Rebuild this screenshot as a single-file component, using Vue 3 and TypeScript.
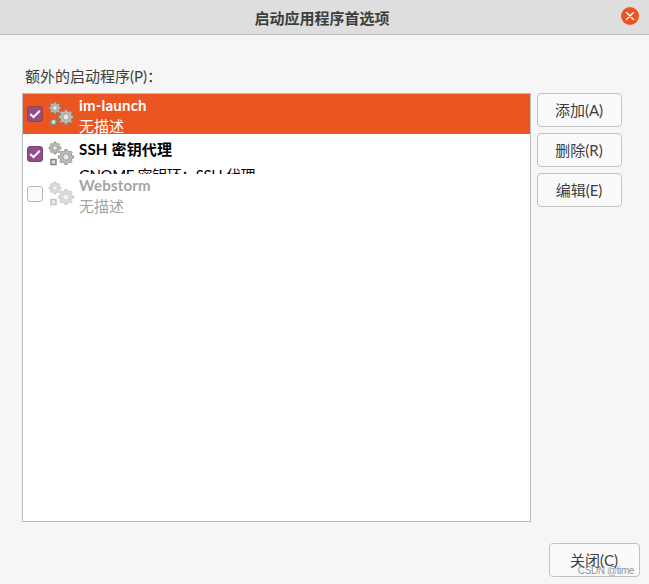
<script setup lang="ts">
interface Row { name: string; desc: string; checked: boolean; selected?: boolean; disabled?: boolean; clipped?: boolean }
const rows: Row[] = [
  { name: 'im-launch', desc: '无描述', checked: true, selected: true },
  { name: 'SSH 密钥代理', desc: 'GNOME 密钥环：SSH 代理', checked: true, clipped: true },
  { name: 'Webstorm', desc: '无描述', checked: false, disabled: true },
]
const buttons = ['添加(A)', '删除(R)', '编辑(E)']

function gear(cx: number, cy: number, outer: number, inner: number, teeth: number): string {
  const pts: string[] = []
  const step = (Math.PI * 2) / teeth
  for (let i = 0; i < teeth; i++) {
    const a = i * step
    const w = step * 0.24
    const corners: [number, number][] = [
      [a - w * 1.25, inner], [a - w * 0.8, outer], [a + w * 0.8, outer], [a + w * 1.25, inner],
    ]
    for (const [an, r] of corners) {
      pts.push(`${(cx + Math.cos(an) * r).toFixed(2)} ${(cy + Math.sin(an) * r).toFixed(2)}`)
    }
  }
  return 'M' + pts.join('L') + 'Z'
}
const bigGear = gear(18, 16, 7.6, 6, 8)
const midGear = gear(7, 7, 6, 4.6, 8)
</script>

<template>
  <div class="window">
    <header class="titlebar">
      <span class="title">启动应用程序首选项</span>
      <span class="close">
        <svg width="10" height="10" viewBox="0 0 10 10"><path d="M1.5 1.5L8.5 8.5M8.5 1.5L1.5 8.5" stroke="#fff" stroke-width="1.4" stroke-linecap="round" /></svg>
      </span>
    </header>
    <main class="content">
      <div class="label">额外的启动程序(P)：</div>
      <div class="columns">
        <div class="list">
          <div
            v-for="row in rows"
            :key="row.name"
            class="row"
            :class="{ selected: row.selected, disabled: row.disabled, clipped: row.clipped }"
          >
            <span class="check" :class="{ on: row.checked }">
              <svg v-if="row.checked" width="12" height="10" viewBox="0 0 12 10"><path d="M1.2 5L4.5 8.2L10.8 1.8" fill="none" stroke="#fff" stroke-width="2" /></svg>
            </span>
            <svg class="gears" width="26" height="26" viewBox="0 0 26 26">
              <path :d="midGear" fill="#bebdb9" stroke="#85847f" stroke-width="0.8" />
              <circle cx="7" cy="7" r="2.4" fill="#e9e8e5" stroke="#85847f" stroke-width="0.7" />
              <path :d="bigGear" fill="#bebdb9" stroke="#85847f" stroke-width="0.8" />
              <circle cx="18" cy="16" r="3.2" fill="#e9e8e5" stroke="#85847f" stroke-width="0.7" />
              <rect x="3" y="18.5" width="5" height="5" fill="#dddcd8" stroke="#85847f" stroke-width="1.5" />
            </svg>
            <div class="text">
              <div class="name">{{ row.name }}</div>
              <div class="desc">{{ row.desc }}</div>
            </div>
          </div>
        </div>
        <div class="actions">
          <button v-for="b in buttons" :key="b" class="btn">{{ b }}</button>
        </div>
      </div>
      <div class="footer">
        <button class="btn close-btn">关闭(C)</button>
      </div>
    </main>
    <span class="watermark">CSDN @time</span>
  </div>
</template>

<style>
html, body { margin: 0; background: #f6f6f6; }
</style>

<style scoped>
.window {
  position: relative;
  width: 649px;
  height: 584px;
  display: flex;
  flex-direction: column;
  overflow: hidden;
  background: #f6f6f6;
  color: #3d3d3d;
  font: 15px Lato, "Noto Sans CJK SC", sans-serif;
}
.titlebar {
  position: relative;
  flex: none;
  height: 34px;
  box-sizing: content-box;
  border-bottom: 1px solid #bdbdbd;
  background: #dedede;
  display: flex;
  align-items: center;
  justify-content: center;
  padding-right: 5px;
}
.title { font-weight: 700; color: #3d3d3d; }
.close {
  position: absolute;
  right: 10px;
  top: 7px;
  width: 18px;
  height: 18px;
  border-radius: 50%;
  background: #eb5521;
  display: flex;
  align-items: center;
  justify-content: center;
}
.content {
  flex: 1;
  min-height: 0;
  display: flex;
  flex-direction: column;
  padding: 31px 9px 7px 22px;
}
.label {
  height: 27px;
  line-height: 21px;
  padding-left: 3px;
}
.columns { display: flex; gap: 6px; }
.list {
  box-sizing: border-box;
  width: 509px;
  height: 429px;
  border: 1px solid #bcbcbc;
  background: #fff;
  overflow: hidden;
}
.row {
  box-sizing: border-box;
  height: 40px;
  display: flex;
  align-items: flex-start;
  overflow: hidden;
  color: #000;
}
.row.clipped .text { padding-top: 5px; }
.row.clipped .desc { margin-top: 5px; letter-spacing: -0.4px; }
.row.selected { background: #eb5521; color: #fff; }
.row.disabled { color: #a5a5a5; }
.row.disabled .gears { opacity: 0.5; }
.check {
  flex: none;
  box-sizing: border-box;
  width: 16px;
  height: 16px;
  margin: 12px 0 0 4px;
  border: 1px solid #b8b8b8;
  border-radius: 3px;
  background: #fbfbfb;
  display: flex;
  align-items: center;
  justify-content: center;
}
.check.on { background: #924d8b; border-color: #7d4277; }
.selected .check.on { border-color: #a8412a; }
.gears { flex: none; margin: 7px 0 0 5px; }
.text { margin-left: 5px; padding-top: 1px; }
.name { font-weight: 700; line-height: 21px; height: 21px; letter-spacing: 0.2px; }
.desc { line-height: 21px; height: 21px; }
.actions {
  display: flex;
  flex-direction: column;
  gap: 6px;
}
.btn {
  box-sizing: border-box;
  width: 85px;
  height: 34px;
  border: 1px solid #c2c2c2;
  border-radius: 4px;
  background: #fafafa;
  color: #3d3d3d;
  font: inherit;
  padding: 0 1px 2px 0;
}
.footer {
  margin-top: auto;
  display: flex;
  justify-content: flex-end;
}
.close-btn { width: 91px; height: 34px; }
.watermark {
  position: absolute;
  right: 15px;
  bottom: 8px;
  font: 10px "Liberation Sans", sans-serif;
  letter-spacing: -0.4px;
  color: rgba(110, 110, 110, 0.75);
}
</style>
